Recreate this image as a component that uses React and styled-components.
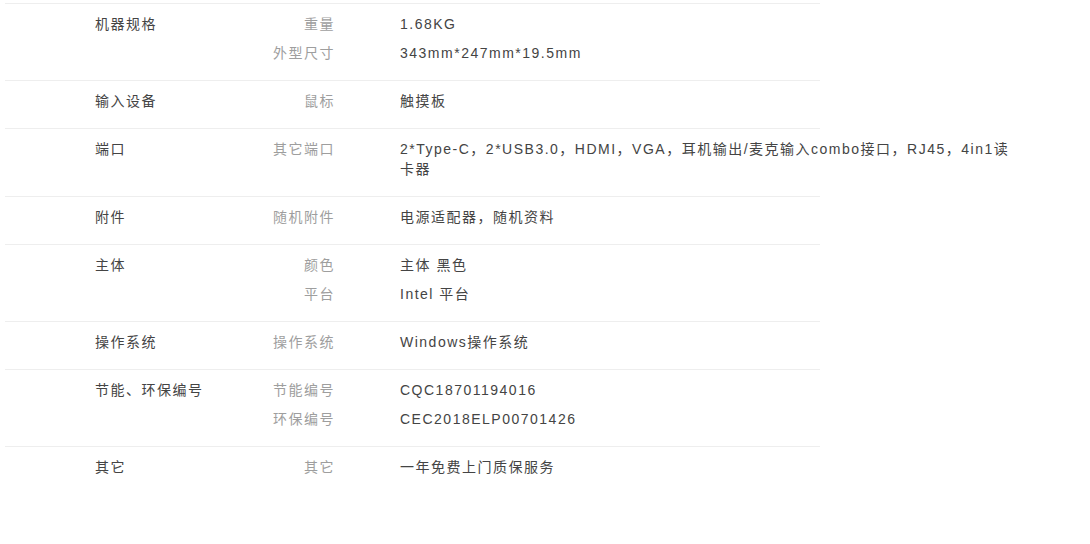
import React from "react";
import styled, { createGlobalStyle } from "styled-components";

const GlobalStyle = createGlobalStyle`
  body {
    margin: 0;
    background: #fff;
    font-family: "Liberation Sans", "Noto Sans CJK SC", sans-serif;
  }
`;

const Table = styled.div`
  width: 815px;
  margin: 3px 0 0 5px;
  font-size: 14px;
  letter-spacing: 1.5px;
`;

const Row = styled.div`
  display: grid;
  grid-template-columns: 150px auto;
  padding: 10px 0 8px 90px;
  border-top: 1px solid #eee;
`;

const Label = styled.div`
  color: #444;
  line-height: 20px;
`;

const Items = styled.div`
  display: flex;
  flex-direction: column;
  gap: 9px;
  padding-bottom: 9px;
`;

const Item = styled.div`
  display: grid;
  grid-template-columns: 90px 622px;
  column-gap: 65px;
  line-height: 20px;
`;

const Key = styled.div`
  color: #9e9e9e;
  text-align: right;
  white-space: nowrap;
`;

const Value = styled.div`
  color: #444;
`;

const specs = [
  { label: "机器规格", items: [["重量", "1.68KG"], ["外型尺寸", "343mm*247mm*19.5mm"]] },
  { label: "输入设备", items: [["鼠标", "触摸板"]] },
  {
    label: "端口",
    items: [["其它端口", "2*Type-C，2*USB3.0，HDMI，VGA，耳机输出/麦克输入combo接口，RJ45，4in1读卡器"]],
  },
  { label: "附件", items: [["随机附件", "电源适配器，随机资料"]] },
  { label: "主体", items: [["颜色", "主体 黑色"], ["平台", "Intel 平台"]] },
  { label: "操作系统", items: [["操作系统", "Windows操作系统"]] },
  { label: "节能、环保编号", items: [["节能编号", "CQC18701194016"], ["环保编号", "CEC2018ELP00701426"]] },
  { label: "其它", items: [["其它", "一年免费上门质保服务"]] },
];

export default function App() {
  return (
    <>
      <GlobalStyle />
      <Table>
        {specs.map((s) => (
          <Row key={s.label}>
            <Label>{s.label}</Label>
            <Items>
              {s.items.map(([k, v]) => (
                <Item key={k}>
                  <Key>{k}</Key>
                  <Value>{v}</Value>
                </Item>
              ))}
            </Items>
          </Row>
        ))}
      </Table>
    </>
  );
}
